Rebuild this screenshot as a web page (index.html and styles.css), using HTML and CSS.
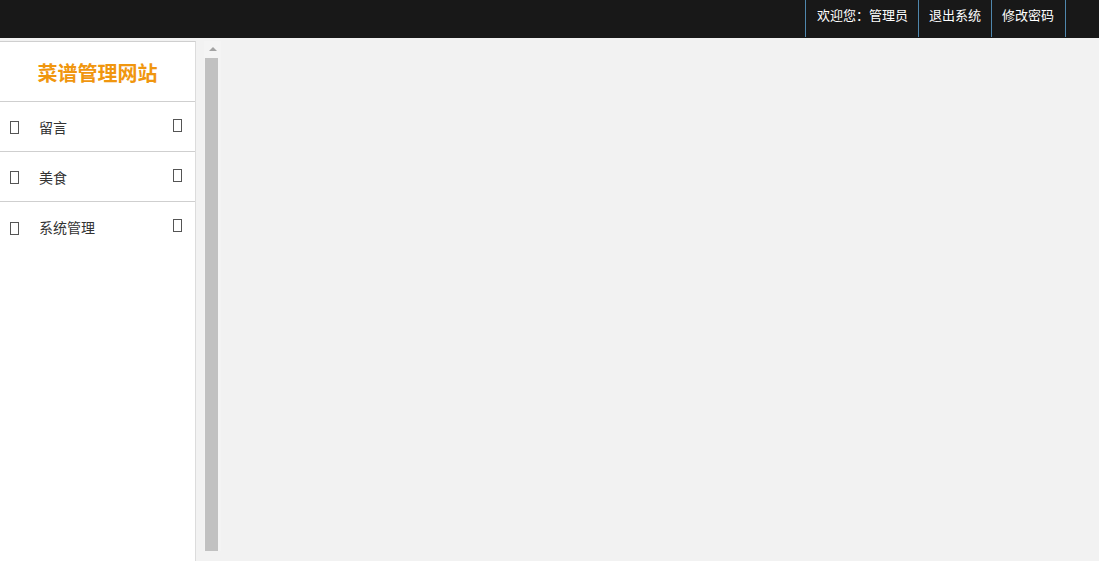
FILE: index.html
```html
<!DOCTYPE html>
<html lang="zh-CN">
<head>
  <meta charset="UTF-8">
  <meta name="viewport" content="width=device-width, initial-scale=1.0">
  <title>菜谱管理网站</title>
  <link rel="stylesheet" href="styles.css">
</head>
<body>
  <div class="topbar">
    <ul class="top-nav">
      <li class="first">欢迎您：管理员</li>
      <li>退出系统</li>
      <li class="last">修改密码</li>
    </ul>
  </div>
  <div class="main">
    <div class="sidebar">
      <div class="logo">菜谱管理网站</div>
      <ul class="menu">
        <li class="menu-item">
          <span class="icon"></span>
          <span class="menu-text">留言</span>
          <span class="icon arrow"></span>
        </li>
        <li class="menu-item">
          <span class="icon"></span>
          <span class="menu-text">美食</span>
          <span class="icon arrow"></span>
        </li>
        <li class="menu-item">
          <span class="icon"></span>
          <span class="menu-text">系统管理</span>
          <span class="icon arrow"></span>
        </li>
      </ul>
    </div>
    <div class="scroll-track">
      <div class="scroll-arrow"></div>
      <div class="scroll-thumb"></div>
    </div>
    <div class="content"></div>
  </div>
</body>
</html>
```

FILE: styles.css
```css
* {
  box-sizing: border-box;
}
html, body {
  height: 100%;
}
body {
  margin: 0;
  background-color: #f2f2f2;
  font-family: "Liberation Sans", "Noto Sans CJK SC", sans-serif;
  overflow: hidden;
}
.topbar {
  height: 38px;
  background-color: #181818;
  display: flex;
  justify-content: flex-end;
  padding-right: 33px;
}
.top-nav {
  display: flex;
  list-style: none;
  margin: 0;
  padding: 0;
}
.top-nav li {
  height: 37px;
  line-height: 32px;
  padding: 0 10px;
  font-size: 13px;
  color: #fff;
  border-left: 1px solid #4f87ad;
  cursor: pointer;
}
.top-nav li.first {
  padding-left: 11px;
}
.top-nav li.last {
  padding-right: 11px;
  border-right: 1px solid #4f87ad;
}
.main {
  display: flex;
  height: calc(100% - 38px);
  padding-top: 3px;
}
.sidebar {
  width: 196px;
  flex: 0 0 196px;
  background-color: #fff;
  border-top: 1px solid #cfcfcf;
  border-right: 1px solid #dcdcdc;
}
.logo {
  height: 60px;
  line-height: 60px;
  padding-top: 2px;
  text-align: center;
  font-size: 20px;
  font-weight: bold;
  color: #f0960e;
  border-bottom: 1px solid #cfcfcf;
}
.menu {
  list-style: none;
  margin: 0;
  padding: 0;
}
.menu-item {
  display: flex;
  align-items: center;
  height: 50px;
  padding: 0 13px 0 10px;
  border-bottom: 1px solid #cfcfcf;
  font-size: 14px;
  color: #333;
  cursor: pointer;
}
.menu-item:last-child {
  border-bottom: none;
}
.icon {
  width: 9px;
  height: 13px;
  border: 1px solid #555;
  margin-top: 2px;
}
.icon.arrow {
  margin-top: -3px;
}
.menu-text {
  flex: 1;
  margin-left: 20px;
}
.scroll-track {
  width: 17px;
  flex: 0 0 17px;
  margin-left: 8px;
  margin-bottom: 10px;
  background-color: #f4f4f4;
  display: flex;
  flex-direction: column;
  align-items: center;
}
.scroll-arrow {
  width: 0;
  height: 0;
  margin-top: 6px;
  border-left: 4px solid transparent;
  border-right: 4px solid transparent;
  border-bottom: 4px solid #a3a3a3;
}
.scroll-thumb {
  width: 13px;
  flex: 1;
  margin-top: 7px;
  background-color: #c1c1c1;
  margin-left: -2px;
}
.content {
  flex: 1;
}
```
